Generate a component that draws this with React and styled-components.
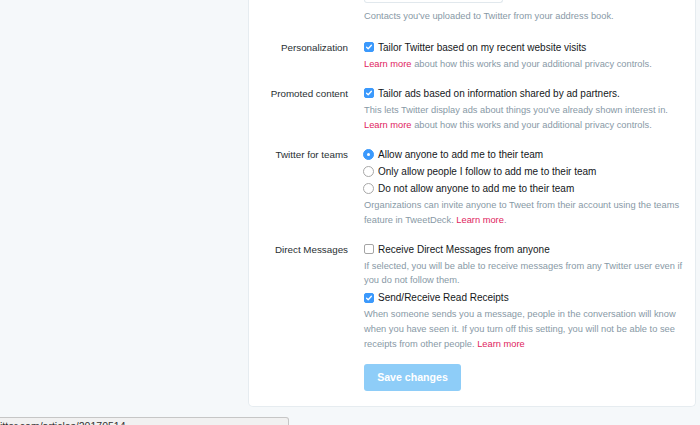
import styled, { createGlobalStyle } from "styled-components";

const GlobalStyle = createGlobalStyle`
  html, body {
    margin: 0;
    padding: 0;
    background: #f5f8fa;
    font-family: "Liberation Sans", Arial, sans-serif;
    overflow: hidden;
  }
`;

const Page = styled.div`
  height: 425px;
  padding-left: 248px;
  box-sizing: border-box;
`;

const Card = styled.div`
  width: 448px;
  box-sizing: border-box;
  background: #fff;
  border: 1px solid #e6ecf0;
  border-top: none;
  border-radius: 0 0 5px 5px;
  padding-bottom: 15px;
`;

const Row = styled.div`
  display: grid;
  grid-template-columns: 99px 1fr;
  column-gap: 16px;
  margin-top: ${(p) => p.gap ?? 13.3}px;
`;

const Label = styled.div`
  text-align: right;
  font-size: 9.8px;
  line-height: 17px;
  color: #292f33;
`;

const Controls = styled.div`
  display: flex;
  flex-direction: column;
  padding-right: 10px;
`;

const InputStub = styled.div`
  width: 139px;
  height: 3px;
  box-sizing: border-box;
  border: 1px solid #e1e8ed;
  border-top: none;
  border-radius: 0 0 3px 3px;
`;

const Option = styled.div`
  display: flex;
  align-items: center;
  gap: 4px;
  height: 17px;
  margin-top: ${(p) => p.gap ?? 0}px;
  font-size: 10px;
  color: #14171a;
  white-space: nowrap;
`;

const Box = styled.span`
  width: 10px;
  height: 10px;
  box-sizing: border-box;
  border-radius: 2px;
  display: flex;
  align-items: center;
  justify-content: center;
  background: ${(p) => (p.checked ? "#3b99fc" : "#fff")};
  border: 1px solid ${(p) => (p.checked ? "#3b99fc" : "#a5a5a5")};
`;

const Radio = styled.span`
  width: 11px;
  height: 11px;
  box-sizing: border-box;
  border-radius: 50%;
  display: flex;
  align-items: center;
  justify-content: center;
  margin-left: -1px;
  background: ${(p) => (p.checked ? "#3b99fc" : "#fff")};
  border: 1px solid ${(p) => (p.checked ? "#3b99fc" : "#a8a8a8")};
  &::after {
    content: "";
    width: 3px;
    height: 3px;
    border-radius: 50%;
    background: ${(p) => (p.checked ? "#fff" : "transparent")};
  }
`;

const Help = styled.div`
  font-size: 9.3px;
  line-height: 14.8px;
  color: #8899a6;
  white-space: nowrap;
  margin-top: ${(p) => p.gap ?? 0}px;
`;

const Link = styled.a`
  color: #e0245e;
  text-decoration: none;
`;

const SaveButton = styled.button`
  margin-top: 12px;
  width: 97px;
  height: 27px;
  border: none;
  border-radius: 3px;
  background: #8ecdf8;
  color: #fff;
  font-family: "Liberation Sans", Arial, sans-serif;
  font-weight: bold;
  font-size: 10.6px;
  padding: 0;
`;

const StatusBubble = styled.div`
  position: fixed;
  left: 0;
  top: 417px;
  width: 289px;
  height: 12px;
  box-sizing: border-box;
  background: #f1f1f1;
  border: 1px solid #c6c6c6;
  border-left: none;
  border-radius: 0 3px 0 0;
  font-size: 10.5px;
  line-height: 12px;
  color: #333;
  padding-top: 2px;
  overflow: hidden;
  white-space: nowrap;
`;

function Check({ checked }) {
  return (
    <Box checked={checked}>
      {checked && (
        <svg width="8" height="8" viewBox="0 0 8 8">
          <path
            d="M1.6 4.2 L3.2 5.8 L6.4 2.2"
            fill="none"
            stroke="#fff"
            strokeWidth="1.3"
            strokeLinecap="round"
            strokeLinejoin="round"
          />
        </svg>
      )}
    </Box>
  );
}

const privacy = (
  <>
    <Link href="#">Learn more</Link> about how this works and your additional privacy controls.
  </>
);

export default function App() {
  return (
    <>
      <GlobalStyle />
      <Page>
        <Card>
          <Row gap={0}>
            <div />
            <Controls>
              <InputStub />
              <Help gap={6}>Contacts you've uploaded to Twitter from your address book.</Help>
            </Controls>
          </Row>

          <Row gap={15}>
            <Label>Personalization</Label>
            <Controls>
              <Option>
                <Check checked />
                Tailor Twitter based on my recent website visits
              </Option>
              <Help gap={1}>{privacy}</Help>
            </Controls>
          </Row>

          <Row>
            <Label>Promoted content</Label>
            <Controls>
              <Option>
                <Check checked />
                Tailor ads based on information shared by ad partners.
              </Option>
              <Help gap={1}>
                This lets Twitter display ads about things you've already shown interest in.
                <br />
                {privacy}
              </Help>
            </Controls>
          </Row>

          <Row>
            <Label>Twitter for teams</Label>
            <Controls>
              <Option>
                <Radio checked />
                Allow anyone to add me to their team
              </Option>
              <Option>
                <Radio />
                Only allow people I follow to add me to their team
              </Option>
              <Option>
                <Radio />
                Do not allow anyone to add me to their team
              </Option>
              <Help gap={1}>
                Organizations can invite anyone to Tweet from their account using the teams
                <br />
                feature in TweetDeck. <Link href="#">Learn more</Link>.
              </Help>
            </Controls>
          </Row>

          <Row>
            <Label>Direct Messages</Label>
            <Controls>
              <Option>
                <Check />
                Receive Direct Messages from anyone
              </Option>
              <Help gap={1}>
                If selected, you will be able to receive messages from any Twitter user even if
                <br />
                you do not follow them.
              </Help>
              <Option gap={1}>
                <Check checked />
                Send/Receive Read Receipts
              </Option>
              <Help gap={1}>
                When someone sends you a message, people in the conversation will know
                <br />
                when you have seen it. If you turn off this setting, you will not be able to see
                <br />
                receipts from other people. <Link href="#">Learn more</Link>
              </Help>
              <div>
                <SaveButton>Save changes</SaveButton>
              </div>
            </Controls>
          </Row>
        </Card>
      </Page>
      <StatusBubble>itter.com/articles/20170514</StatusBubble>
    </>
  );
}
